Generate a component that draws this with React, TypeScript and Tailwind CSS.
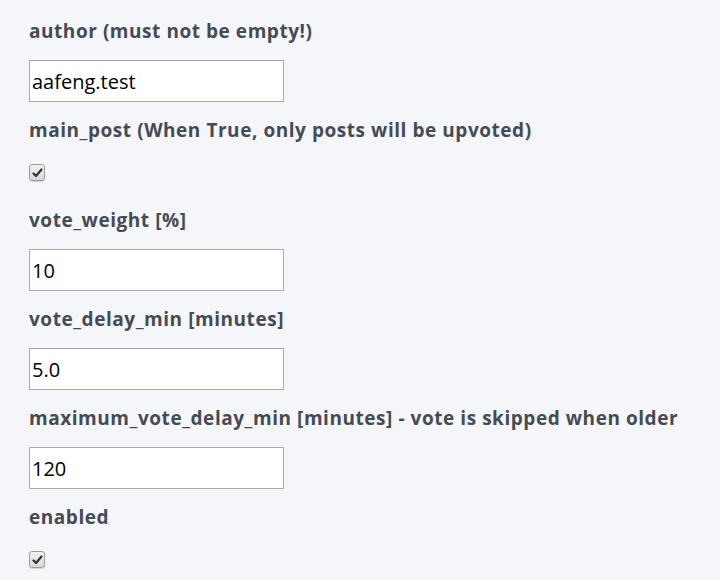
import React from "react";

const labelCls =
  "block h-[30px] leading-[33px] text-[19px] tracking-[0.55px] font-bold text-[#454b55] whitespace-nowrap";
const labelFont = { fontFamily: "'Open Sans', Lato, sans-serif" };

function Label({ children }: { children: React.ReactNode }) {
  return (
    <div className={labelCls} style={labelFont}>
      {children}
    </div>
  );
}

function TextField({ label, value }: { label: string; value: string }) {
  return (
    <div className="flex flex-col">
      <Label>{label}</Label>
      <input
        readOnly
        value={value}
        className="mt-[15px] mb-[12px] w-[255px] h-[42px] border border-[#a9a9a9] bg-white px-[2px] text-[20px] text-black outline-none"
        style={{ fontFamily: "'Open Sans', Lato, sans-serif" }}
      />
    </div>
  );
}

function Check() {
  return (
    <div className="mt-[20px] mb-[23px] w-[16px] h-[17px] rounded-[3px] border border-[#9c9c9c] bg-gradient-to-b from-[#f2f2f2] to-[#d9d9d9] flex items-center justify-center shadow-[0_1px_1px_rgba(0,0,0,0.15)]">
      <svg width="11" height="10" viewBox="0 0 11 10">
        <path d="M1.5 5.5 L4 8 L9.5 1.5" stroke="#333" strokeWidth="2.2" fill="none" strokeLinecap="round" strokeLinejoin="round" />
      </svg>
    </div>
  );
}

function CheckField({ label }: { label: string }) {
  return (
    <div className="flex flex-col">
      <Label>{label}</Label>
      <Check />
    </div>
  );
}

export default function App() {
  return (
    <div className="w-[720px] h-[580px] bg-[#f5f6fa] pl-[29px] pt-[15px] overflow-hidden">
      <TextField label="author (must not be empty!)" value="aafeng.test" />
      <CheckField label="main_post (When True, only posts will be upvoted)" />
      <TextField label="vote_weight [%]" value="10" />
      <TextField label="vote_delay_min [minutes]" value="5.0" />
      <TextField
        label="maximum_vote_delay_min [minutes] - vote is skipped when older"
        value="120"
      />
      <CheckField label="enabled" />
    </div>
  );
}
